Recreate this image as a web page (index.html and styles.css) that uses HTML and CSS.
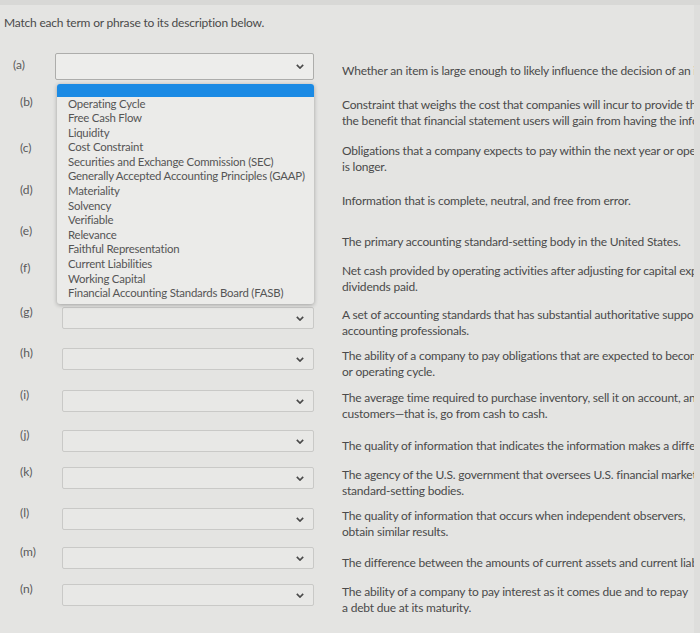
FILE: index.html
```html
<!DOCTYPE html>
<html lang="en">
<head>
    <meta charset="UTF-8">
    <title>Match each term</title>
    <link rel="stylesheet" href="styles.css">
</head>
<body>
    <div class="page">
        <p class="prompt">Match each term or phrase to its description below.</p>

        <div class="rows">
            <div class="row open">
                <span class="letter">(a)</span>
                <div class="select active">
                    <svg class="chev" viewBox="0 0 10 6"><polyline points="1,1 5,5 9,1"/></svg>
                    <!-- open option list -->
                    <ul class="options">
                        <li class="picked"></li>
                        <li>Operating Cycle</li>
                        <li>Free Cash Flow</li>
                        <li>Liquidity</li>
                        <li>Cost Constraint</li>
                        <li>Securities and Exchange Commission (SEC)</li>
                        <li>Generally Accepted Accounting Principles (GAAP)</li>
                        <li>Materiality</li>
                        <li>Solvency</li>
                        <li>Verifiable</li>
                        <li>Relevance</li>
                        <li>Faithful Representation</li>
                        <li>Current Liabilities</li>
                        <li>Working Capital</li>
                        <li>Financial Accounting Standards Board (FASB)</li>
                    </ul>
                </div>
                <p class="desc">Whether an item is large enough to likely influence the decision of an investor or creditor.</p>
            </div>
            <div class="row">
                <span class="letter">(b)</span>
                <div class="select"><svg class="chev" viewBox="0 0 10 6"><polyline points="1,1 5,5 9,1"/></svg></div>
                <p class="desc">Constraint that weighs the cost that companies will incur to provide the information against<br>the benefit that financial statement users will gain from having the information available.</p>
            </div>
            <div class="row">
                <span class="letter">(c)</span>
                <div class="select"><svg class="chev" viewBox="0 0 10 6"><polyline points="1,1 5,5 9,1"/></svg></div>
                <p class="desc">Obligations that a company expects to pay within the next year or operating cycle, whichever<br>is longer.</p>
            </div>
            <div class="row">
                <span class="letter">(d)</span>
                <div class="select"><svg class="chev" viewBox="0 0 10 6"><polyline points="1,1 5,5 9,1"/></svg></div>
                <p class="desc">Information that is complete, neutral, and free from error.</p>
            </div>
            <div class="row">
                <span class="letter">(e)</span>
                <div class="select"><svg class="chev" viewBox="0 0 10 6"><polyline points="1,1 5,5 9,1"/></svg></div>
                <p class="desc">The primary accounting standard-setting body in the United States.</p>
            </div>
            <div class="row">
                <span class="letter">(f)</span>
                <div class="select"><svg class="chev" viewBox="0 0 10 6"><polyline points="1,1 5,5 9,1"/></svg></div>
                <p class="desc">Net cash provided by operating activities after adjusting for capital expenditures and<br>dividends paid.</p>
            </div>
            <div class="row">
                <span class="letter">(g)</span>
                <div class="select"><svg class="chev" viewBox="0 0 10 6"><polyline points="1,1 5,5 9,1"/></svg></div>
                <p class="desc">A set of accounting standards that has substantial authoritative support among<br>accounting professionals.</p>
            </div>
            <div class="row">
                <span class="letter">(h)</span>
                <div class="select"><svg class="chev" viewBox="0 0 10 6"><polyline points="1,1 5,5 9,1"/></svg></div>
                <p class="desc">The ability of a company to pay obligations that are expected to become due within the next year<br>or operating cycle.</p>
            </div>
            <div class="row">
                <span class="letter">(i)</span>
                <div class="select"><svg class="chev" viewBox="0 0 10 6"><polyline points="1,1 5,5 9,1"/></svg></div>
                <p class="desc">The average time required to purchase inventory, sell it on account, and collect cash from<br>customers—that is, go from cash to cash.</p>
            </div>
            <div class="row">
                <span class="letter">(j)</span>
                <div class="select"><svg class="chev" viewBox="0 0 10 6"><polyline points="1,1 5,5 9,1"/></svg></div>
                <p class="desc">The quality of information that indicates the information makes a difference in a decision.</p>
            </div>
            <div class="row">
                <span class="letter">(k)</span>
                <div class="select"><svg class="chev" viewBox="0 0 10 6"><polyline points="1,1 5,5 9,1"/></svg></div>
                <p class="desc">The agency of the U.S. government that oversees U.S. financial markets and accounting<br>standard-setting bodies.</p>
            </div>
            <div class="row">
                <span class="letter">(l)</span>
                <div class="select"><svg class="chev" viewBox="0 0 10 6"><polyline points="1,1 5,5 9,1"/></svg></div>
                <p class="desc">The quality of information that occurs when independent observers,<br>obtain similar results.</p>
            </div>
            <div class="row">
                <span class="letter">(m)</span>
                <div class="select"><svg class="chev" viewBox="0 0 10 6"><polyline points="1,1 5,5 9,1"/></svg></div>
                <p class="desc">The difference between the amounts of current assets and current liabilities.</p>
            </div>
            <div class="row">
                <span class="letter">(n)</span>
                <div class="select"><svg class="chev" viewBox="0 0 10 6"><polyline points="1,1 5,5 9,1"/></svg></div>
                <p class="desc">The ability of a company to pay interest as it comes due and to repay<br>a debt due at its maturity.</p>
            </div>
        </div>
    </div>
</body>
</html>
```

FILE: styles.css
```css
html, body {
    margin: 0;
    padding: 0;
    height: 100%;
    overflow: hidden;
}
body {
    font-family: 'Lato', 'Open Sans', sans-serif;
    background: #dededc;
    color: #4a4a4a;
    border-top: 5px solid #d8d8d6;
}
.page {
    width: 694px;
    height: 100%;
    padding-left: 4px;
    box-sizing: border-box;
    overflow: hidden;
    background: #e4e4e2;
}
.prompt {
    margin: 11px 0 0;
    font-size: 12px;
    line-height: 14px;
    letter-spacing: -0.2px;
}
/* row spacing follows the screenshot, which is a little uneven */
.rows {
    margin-top: 15px;
    display: grid;
    grid-template-rows: 42px 46px 42px 41px 37px 44px 41px 42px 40px 37px 41px 39px 37px 42px;
}
.row {
    display: flex;
    align-items: center;
    height: 42px;
}
.letter {
    flex: none;
    width: 58px;
    padding-left: 16px;
    box-sizing: border-box;
    font-size: 12px;
    line-height: 14px;
    margin-bottom: 12px;
    color: #5a5a5a;
}
.open .letter {
    width: 51px;
    padding-left: 9px;
    margin-bottom: 2px;
}
.select {
    flex: none;
    position: relative;
    width: 252px;
    height: 22px;
    box-sizing: border-box;
    background: #e8e8e6;
    border: 1px solid #c9c9c7;
    border-radius: 2px;
}
.select.active {
    width: 259px;
    height: 27px;
    background: #ededeb;
    border-color: #adadab;
}
.chev {
    position: absolute;
    right: 9px;
    top: 50%;
    width: 8px;
    height: 5px;
    margin-top: -2px;
    fill: none;
    stroke: #4a4a4a;
    stroke-width: 2;
}
.options {
    position: absolute;
    left: 1px;
    right: -1px;
    top: 30px;
    margin: 0;
    padding: 0 0 3px;
    list-style: none;
    background: #ebebe9;
    border-radius: 3px;
    box-shadow: 0 1px 4px rgba(0, 0, 0, 0.3);
    z-index: 2;
}
.options li {
    padding-left: 11px;
    font-size: 11.4px;
    line-height: 14.6px;
    color: #555;
    letter-spacing: -0.2px;
    white-space: nowrap;
}
.options li.picked {
    height: 13px;
    background: #1a8ae4;
    border-radius: 3px 3px 0 0;
}
.desc {
    flex: none;
    margin: 9px 0 0 28px;
    font-size: 12px;
    line-height: 16px;
    letter-spacing: -0.2px;
    white-space: nowrap;
}
```
